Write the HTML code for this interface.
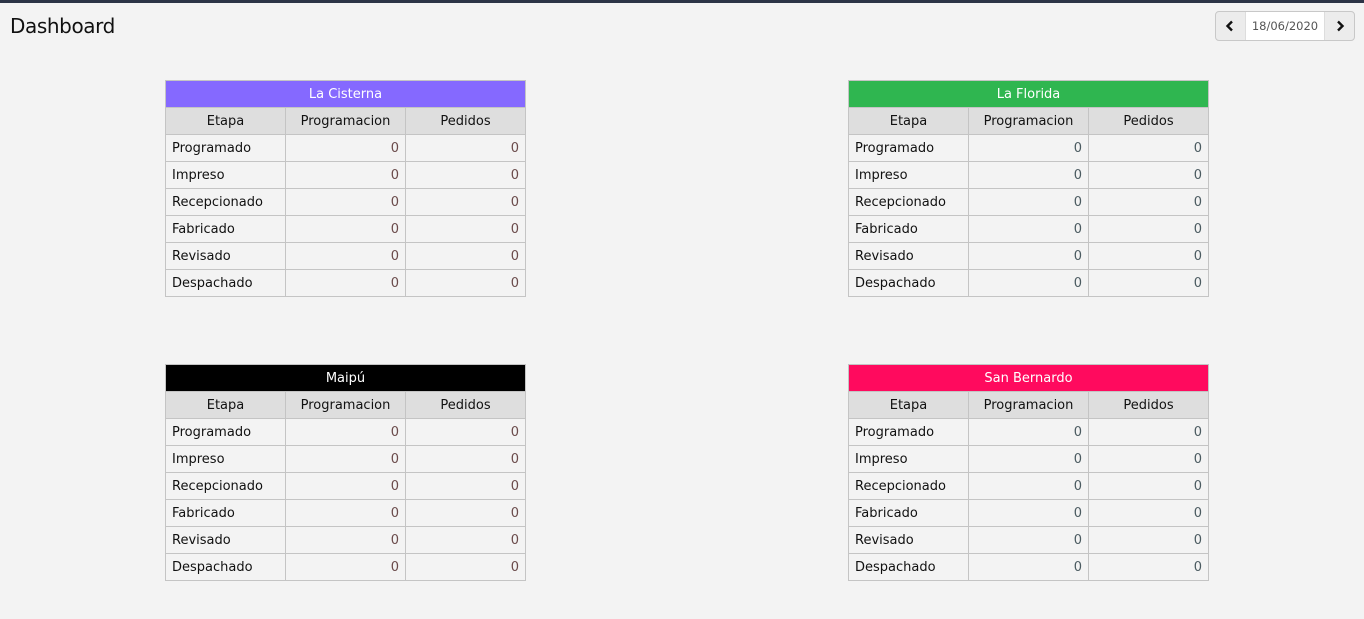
<!DOCTYPE html>
<html><head><meta charset="utf-8"><style>
*{box-sizing:border-box;margin:0;padding:0}
body{width:1364px;height:619px;background:#f3f3f3;font-family:"DejaVu Sans","Liberation Sans",sans-serif;color:#111;position:relative;overflow:hidden}
.top{position:absolute;left:0;top:0;width:1364px;height:3px;background:#2c3446}
h1{position:absolute;left:10px;top:14px;font-size:20px;font-weight:normal;letter-spacing:-0.4px}
.dp{position:absolute;left:1215px;top:11px;width:140px;height:30px;border:1px solid #c8c8c8;border-radius:4px;background:#ececec;display:flex;overflow:hidden}
.dp .b{width:29px;display:flex;align-items:center;justify-content:center}
.dp .t{width:81px;background:#fff;font-size:11.5px;color:#555;display:flex;align-items:center;justify-content:center;border-left:1px solid #ddd;border-right:1px solid #ddd}
table{position:absolute;border-collapse:collapse;width:361px;font-size:13px}
td,th{border:1px solid #c4c4c4;height:27px;padding:1px 6px 0;font-weight:normal}
th.h{color:#fff;border-color:#c4c4c4}
tr.c th{background:#dedede;text-align:center;width:120px}
td.n{text-align:right;color:#6a4a4a}
.r td.n{color:#4a5a60}
</style></head><body>
<div class="top"></div>
<h1>Dashboard</h1>
<div class="dp"><div class="b"><svg width="10" height="12" viewBox="0 0 10 12"><path d="M7 1.5L2.5 6L7 10.5" stroke="#111" stroke-width="2.4" fill="none"/></svg></div><div class="t">18/06/2020</div><div class="b"><svg width="10" height="12" viewBox="0 0 10 12"><path d="M3 1.5L7.5 6L3 10.5" stroke="#111" stroke-width="2.4" fill="none"/></svg></div></div>

<table style="left:165px;top:80px"><tr><th class="h" colspan="3" style="background:#8569ff">La Cisterna</th></tr>
<tr class="c"><th>Etapa</th><th>Programacion</th><th>Pedidos</th></tr>
<tr><td>Programado</td><td class="n">0</td><td class="n">0</td></tr>
<tr><td>Impreso</td><td class="n">0</td><td class="n">0</td></tr>
<tr><td>Recepcionado</td><td class="n">0</td><td class="n">0</td></tr>
<tr><td>Fabricado</td><td class="n">0</td><td class="n">0</td></tr>
<tr><td>Revisado</td><td class="n">0</td><td class="n">0</td></tr>
<tr><td>Despachado</td><td class="n">0</td><td class="n">0</td></tr></table>

<table class="r" style="left:848px;top:80px"><tr><th class="h" colspan="3" style="background:#2fb650">La Florida</th></tr>
<tr class="c"><th>Etapa</th><th>Programacion</th><th>Pedidos</th></tr>
<tr><td>Programado</td><td class="n">0</td><td class="n">0</td></tr>
<tr><td>Impreso</td><td class="n">0</td><td class="n">0</td></tr>
<tr><td>Recepcionado</td><td class="n">0</td><td class="n">0</td></tr>
<tr><td>Fabricado</td><td class="n">0</td><td class="n">0</td></tr>
<tr><td>Revisado</td><td class="n">0</td><td class="n">0</td></tr>
<tr><td>Despachado</td><td class="n">0</td><td class="n">0</td></tr></table>

<table style="left:165px;top:364px"><tr><th class="h" colspan="3" style="background:#000">Maipú</th></tr>
<tr class="c"><th>Etapa</th><th>Programacion</th><th>Pedidos</th></tr>
<tr><td>Programado</td><td class="n">0</td><td class="n">0</td></tr>
<tr><td>Impreso</td><td class="n">0</td><td class="n">0</td></tr>
<tr><td>Recepcionado</td><td class="n">0</td><td class="n">0</td></tr>
<tr><td>Fabricado</td><td class="n">0</td><td class="n">0</td></tr>
<tr><td>Revisado</td><td class="n">0</td><td class="n">0</td></tr>
<tr><td>Despachado</td><td class="n">0</td><td class="n">0</td></tr></table>

<table class="r" style="left:848px;top:364px"><tr><th class="h" colspan="3" style="background:#ff0a5e">San Bernardo</th></tr>
<tr class="c"><th>Etapa</th><th>Programacion</th><th>Pedidos</th></tr>
<tr><td>Programado</td><td class="n">0</td><td class="n">0</td></tr>
<tr><td>Impreso</td><td class="n">0</td><td class="n">0</td></tr>
<tr><td>Recepcionado</td><td class="n">0</td><td class="n">0</td></tr>
<tr><td>Fabricado</td><td class="n">0</td><td class="n">0</td></tr>
<tr><td>Revisado</td><td class="n">0</td><td class="n">0</td></tr>
<tr><td>Despachado</td><td class="n">0</td><td class="n">0</td></tr></table>
</body></html>
